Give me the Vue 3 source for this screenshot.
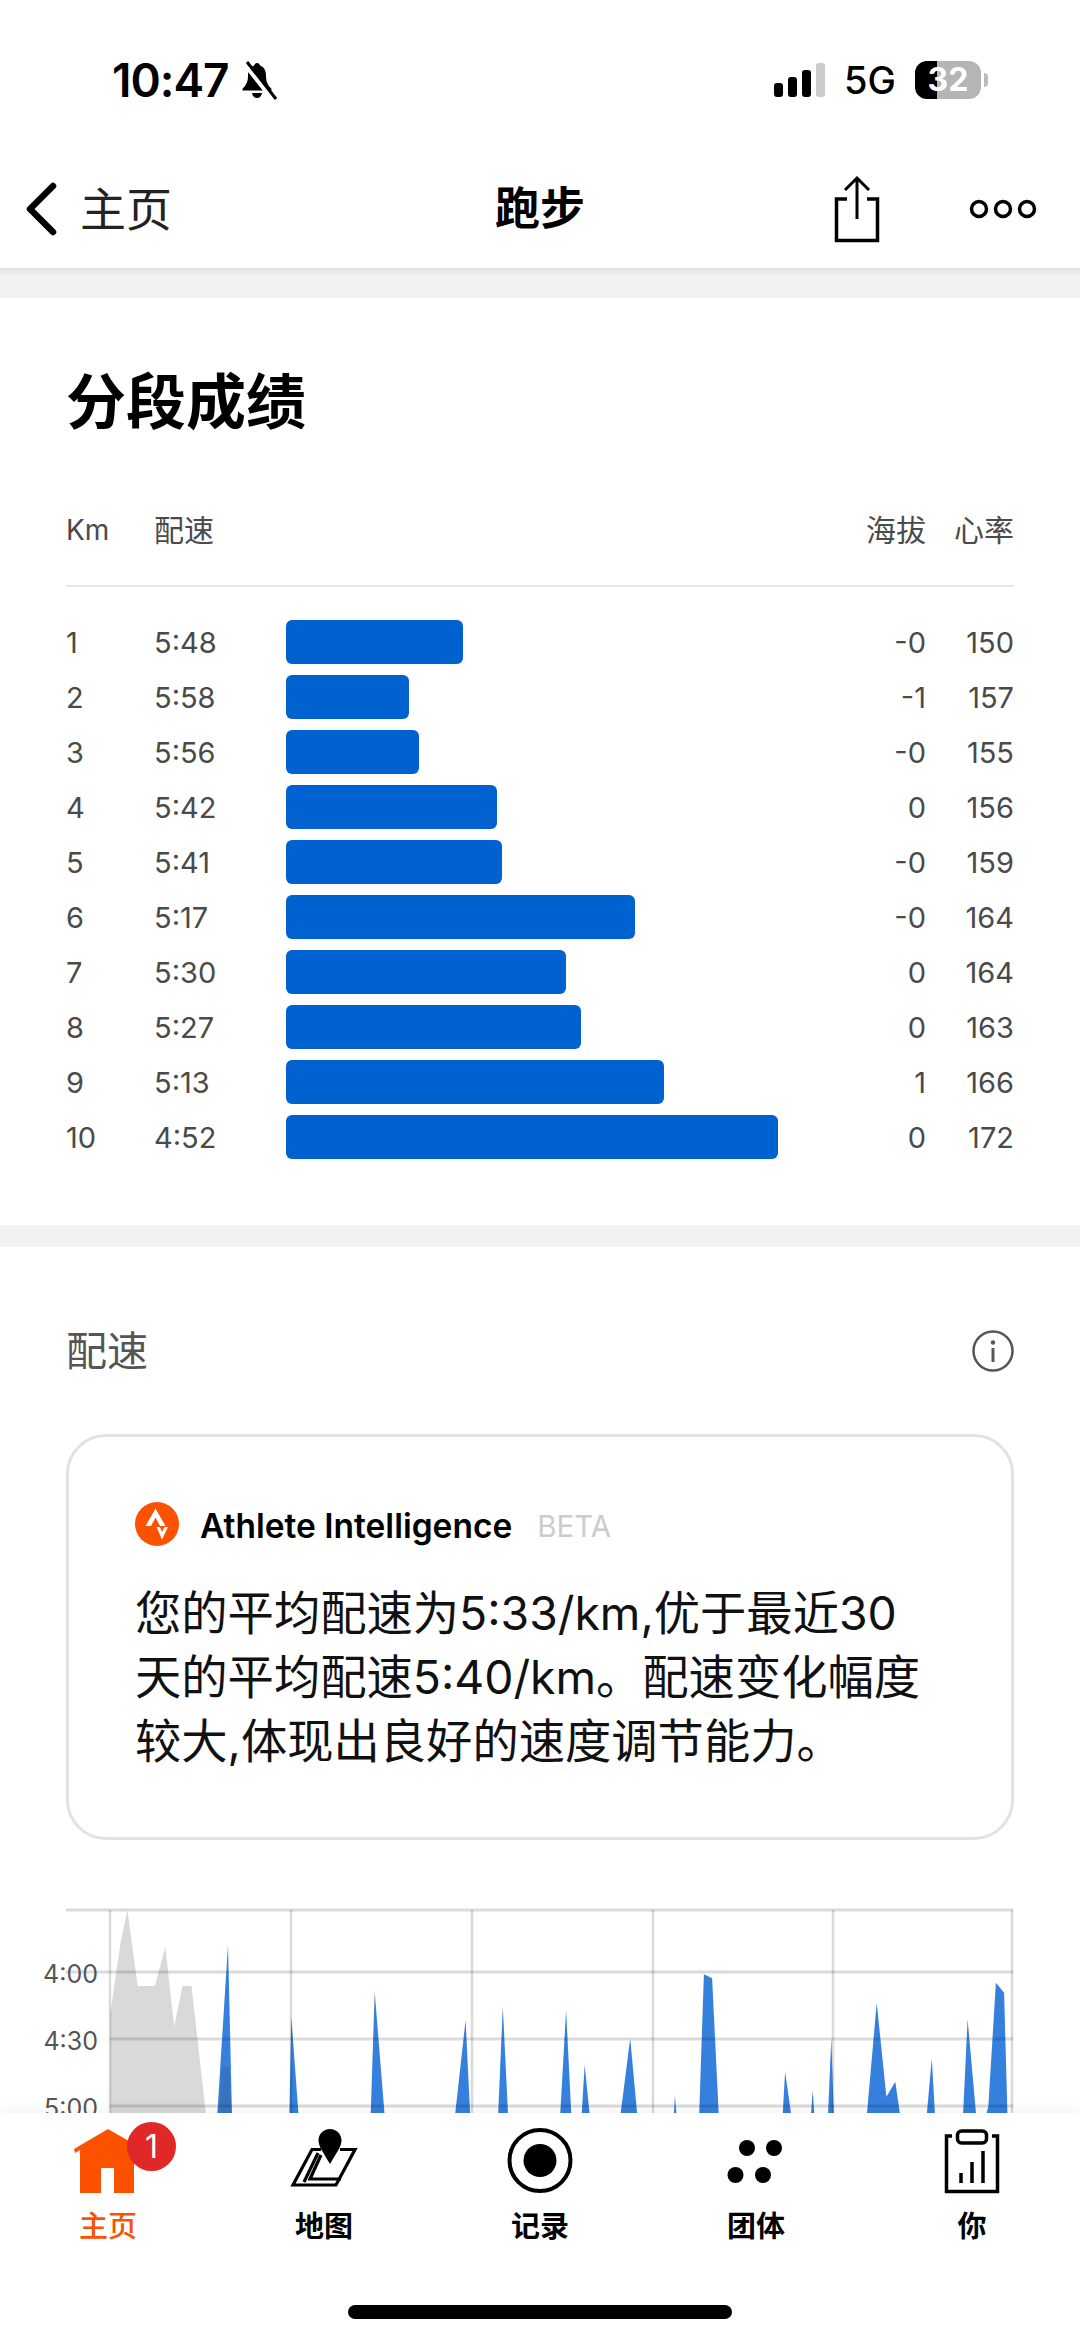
<template>
  <div class="phone">
    <header class="status">
      <div class="status-left">
        <span class="time">10:47</span>
        <svg class="bell" width="36" height="40" viewBox="0 0 36 40">
          <path d="M16 2c-1.500 0-2.500 1-2.800 2.500C8.500 6 7 10 7 15c0 6-2 9-5.500 13v1.500h29V28C27 24 25 21 25 15c0-5-1.500-9-6-10.500C18.700 3 17.500 2 16 2z" fill="#000" />
          <path d="M11 32h10c-.4 3-2.500 5-5 5s-4.600-2-5-5z" fill="#000" />
          <path d="M3 1l30 38" stroke="#fff" stroke-width="6" />
          <path d="M6 1l29 37" stroke="#000" stroke-width="3" />
        </svg>
      </div>
      <div class="status-right">
        <div class="signal">
          <i class="s1"></i><i class="s2"></i><i class="s3"></i><i class="s4"></i>
        </div>
        <span class="net">5G</span>
        <div class="battery"><span>32</span></div>
        <div class="nub"></div>
      </div>
    </header>

    <nav class="navbar">
      <div class="nav-side">
        <svg class="chevron" width="34" height="54" viewBox="0 0 34 54">
          <path d="M29 4L6 27l23 23" fill="none" stroke="#000" stroke-width="6.500" stroke-linecap="round" stroke-linejoin="round" />
        </svg>
        <span class="back">主页</span>
      </div>
      <div class="nav-title">跑步</div>
      <div class="nav-side nav-right">
        <svg class="share" width="48" height="68" viewBox="0 0 48 68">
          <path d="M14 24H3.500v41.500h41V24H34" fill="none" stroke="#000" stroke-width="3.500" />
          <path d="M24 44V3M12 15L24 3l12 12" fill="none" stroke="#000" stroke-width="3" />
        </svg>
        <svg class="more" width="68" height="22" viewBox="0 0 68 22">
          <circle cx="10" cy="11" r="7.500" fill="none" stroke="#000" stroke-width="3.500" />
          <circle cx="34" cy="11" r="7.500" fill="none" stroke="#000" stroke-width="3.500" />
          <circle cx="58" cy="11" r="7.500" fill="none" stroke="#000" stroke-width="3.500" />
        </svg>
      </div>
    </nav>

    <main class="content">
      <section class="splits">
        <h1>分段成绩</h1>
        <div class="splits-head">
          <span class="km-head">Km</span>
          <span>配速</span>
          <span></span>
          <span class="num">海拔</span>
          <span class="num">心率</span>
        </div>
        <div class="splits-rows">
          <div v-for="row in splits" :key="row.km" class="split-row">
            <span>{{ row.km }}</span>
            <span>{{ row.pace }}</span>
            <div class="bar" :style="{ width: row.bar + 'px' }"></div>
            <span class="num">{{ row.elev }}</span>
            <span class="num">{{ row.hr }}</span>
          </div>
        </div>
      </section>

      <section class="pace">
        <div class="pace-head">
          <span class="pace-title">配速</span>
          <svg width="42" height="42" viewBox="0 0 42 42">
            <circle cx="21" cy="21" r="19.500" fill="none" stroke="#555" stroke-width="2.500" />
            <circle cx="21" cy="12.500" r="2.200" fill="#555" />
            <path d="M21 18v14" stroke="#555" stroke-width="3" />
          </svg>
        </div>
        <div class="ai-card">
          <div class="ai-head">
            <svg width="44" height="44" viewBox="0 0 44 44">
              <circle cx="22" cy="22" r="22" fill="#fc5200" />
              <path d="M10.500 24L20.500 6.500 30.500 24h-5.500l-4.500-8.500L16 24z" fill="#fff" />
              <path d="M21.500 25L27 37.500 33 25h-3.500L27 30l-2.200-5z" fill="#fff" />
            </svg>
            <span class="ai-name">Athlete Intelligence</span>
            <span class="ai-beta">BETA</span>
          </div>
          <p>您的平均配速为5:33/km,优于最近30<br />天的平均配速5:40/km。配速变化幅度<br />较大,体现出良好的速度调节能力。</p>
        </div>

        <svg class="chart" width="1080" height="220" viewBox="0 1900 1080 220">
          <polygon :points="grayArea" fill="#d9d9d9" />
          <polygon v-for="(s, i) in spikes" :key="i" :points="s" fill="#3580dc" />
          <polygon :points="grayLow" fill="rgba(70,70,70,0.2)" />
          <g stroke="rgba(0,0,0,0.14)" stroke-width="3">
            <line x1="66" x2="1013" y1="1910" y2="1910" />
            <line x1="66" x2="1013" y1="1972" y2="1972" />
            <line x1="110" x2="1013" y1="2039" y2="2039" />
            <line x1="110" x2="1013" y1="2106" y2="2106" />
          </g>
          <g stroke="rgba(0,0,0,0.15)" stroke-width="2.500">
            <line v-for="x in gridX" :key="x" :x1="x" :x2="x" y1="1910" y2="2120" />
          </g>
          <g class="chart-label">
            <text x="98" y="1983">4:00</text>
            <text x="98" y="2050">4:30</text>
            <text x="98" y="2117">5:00</text>
          </g>
        </svg>
      </section>
    </main>

    <footer class="tabbar">
      <div class="tab active">
        <div class="tab-icon">
          <svg width="80" height="70" viewBox="0 0 80 70">
            <path d="M6 24L40 4l26 15v49H46V43H33v25H12V25l-5 3z" fill="#fc5200" />
          </svg>
          <span class="badge">1</span>
        </div>
        <span class="tab-label">主页</span>
      </div>
      <div class="tab">
        <div class="tab-icon">
          <svg width="80" height="70" viewBox="0 0 80 70">
            <path d="M37 24.500H28L9 60H52L71 24.500H56" fill="none" stroke="#000" stroke-width="3.200" />
            <path d="M34 28L20 57" fill="none" stroke="#000" stroke-width="3.200" />
            <path d="M37 30L26 54H57" fill="none" stroke="#000" stroke-width="3.200" />
            <path d="M46 4c6.500 0 11.500 5 11.500 11.500C57.500 22 51 30 46 39c-5-9-11.500-17-11.500-23.500C34.500 9 39.500 4 46 4z" fill="#000" />
          </svg>
        </div>
        <span class="tab-label">地图</span>
      </div>
      <div class="tab">
        <div class="tab-icon">
          <svg width="80" height="70" viewBox="0 0 80 70">
            <circle cx="40" cy="35.500" r="30.500" fill="none" stroke="#000" stroke-width="4" />
            <circle cx="40" cy="35.500" r="16.500" fill="#000" />
          </svg>
        </div>
        <span class="tab-label">记录</span>
      </div>
      <div class="tab">
        <div class="tab-icon">
          <svg width="80" height="70" viewBox="0 0 80 70">
            <circle cx="31" cy="23" r="8" fill="#000" />
            <circle cx="58" cy="23" r="8" fill="#000" />
            <circle cx="19.500" cy="50" r="8" fill="#000" />
            <circle cx="47" cy="50" r="8" fill="#000" />
          </svg>
        </div>
        <span class="tab-label">团体</span>
      </div>
      <div class="tab">
        <div class="tab-icon">
          <svg width="80" height="70" viewBox="0 0 80 70">
            <path d="M20 11H14.500v55.500h51V11H60" fill="none" stroke="#000" stroke-width="3.500" />
            <rect x="25.500" y="6" width="29" height="12" rx="4" fill="#fff" stroke="#000" stroke-width="3.500" />
            <path d="M29 48v10M40 37v21M51 26v32" fill="none" stroke="#000" stroke-width="3.500" />
          </svg>
        </div>
        <span class="tab-label">你</span>
      </div>
      <div class="home-bar"></div>
    </footer>
  </div>
</template>

<script setup>
const splits = [
  { km: 1, pace: '5:48', bar: 177, elev: '-0', hr: 150 },
  { km: 2, pace: '5:58', bar: 123, elev: '-1', hr: 157 },
  { km: 3, pace: '5:56', bar: 133, elev: '-0', hr: 155 },
  { km: 4, pace: '5:42', bar: 211, elev: '0', hr: 156 },
  { km: 5, pace: '5:41', bar: 216, elev: '-0', hr: 159 },
  { km: 6, pace: '5:17', bar: 349, elev: '-0', hr: 164 },
  { km: 7, pace: '5:30', bar: 280, elev: '0', hr: 164 },
  { km: 8, pace: '5:27', bar: 295, elev: '0', hr: 163 },
  { km: 9, pace: '5:13', bar: 378, elev: '1', hr: 166 },
  { km: 10, pace: '4:52', bar: 492, elev: '0', hr: 172 },
]

const gridX = [110, 291, 472, 653, 833, 1012]

// traced from a crop stretched 1.452x / 3x, offset 1880
const toPoints = (pts) =>
  pts.map(([x, y]) => `${(x / 1.452).toFixed(1)},${(y / 3 + 1880).toFixed(1)}`).join(' ')

const grayArea = toPoints([
  [160, 720], [160, 400], [175, 190], [185, 90], [200, 318], [225, 318], [240, 200],
  [253, 440], [265, 318], [278, 318], [300, 720],
])

const grayLow = toPoints([[318, 720], [322, 560], [333, 560], [337, 720]])

const spikes = [
  [[315, 720], [331, 195], [337, 720]],
  [[420, 720], [423, 410], [434, 720]],
  [[538, 720], [544, 335], [559, 720]],
  [[660, 720], [676, 420], [683, 720]],
  [[723, 720], [730, 380], [738, 720]],
  [[813, 720], [822, 390], [830, 720]],
  [[844, 720], [849, 555], [857, 720]],
  [[900, 720], [915, 475], [926, 720]],
  [[978, 720], [980, 645], [983, 720]],
  [[1015, 720], [1022, 283], [1034, 295], [1044, 720]],
  [[1136, 720], [1140, 575], [1150, 720]],
  [[1177, 720], [1180, 630], [1183, 720]],
  [[1202, 720], [1207, 475], [1211, 720]],
  [[1258, 720], [1273, 368], [1287, 650], [1300, 605], [1308, 720]],
  [[1345, 720], [1353, 535], [1358, 720]],
  [[1398, 720], [1405, 418], [1418, 720]],
  [[1430, 720], [1435, 680], [1446, 308], [1458, 338], [1463, 720]],
].map(toPoints)
</script>

<style scoped>
.phone {
  width: 1080px;
  height: 2341px;
  display: flex;
  flex-direction: column;
  overflow: hidden;
  background: #fff;
  color: #000;
  font-family: Inter, "Noto Sans CJK SC", sans-serif;
}

.status {
  height: 150px;
  flex: none;
  display: flex;
  justify-content: space-between;
  padding: 58px 92px 0 112px;
  box-sizing: border-box;
}

.status-left,
.status-right {
  display: flex;
  align-items: flex-start;
}

.time {
  font-size: 46px;
  font-weight: 600;
  line-height: 44px;
  letter-spacing: -1px;
}

.bell {
  margin: 3px 0 0 12px;
}

.signal {
  display: flex;
  align-items: flex-end;
  gap: 5px;
  height: 34px;
  margin-top: 5px;
}

.signal i {
  width: 9px;
  border-radius: 3px;
  background: #000;
}

.s1 { height: 14px; }
.s2 { height: 20px; }
.s3 { height: 27px; }
.s4 { height: 34px; background: #ccc !important; }

.net {
  margin-left: 19px;
  font-size: 38px;
  font-weight: 500;
  line-height: 44px;
}

.battery {
  width: 66px;
  height: 38px;
  margin: 3px 0 0 19px;
  border-radius: 12px;
  background: linear-gradient(90deg, #000 22px, #b5b5b5 22px);
  color: #fff;
  font-size: 32px;
  font-weight: 700;
  line-height: 38px;
  text-align: center;
}

.nub {
  width: 4px;
  height: 14px;
  margin: 15px 0 0 3px;
  border-radius: 0 4px 4px 0;
  background: #bbb;
}

.navbar {
  height: 118px;
  flex: none;
  display: flex;
  align-items: center;
  padding: 0 24px;
  box-sizing: border-box;
}

.nav-side {
  flex: 1;
  display: flex;
  align-items: center;
}

.nav-right {
  justify-content: flex-end;
  gap: 88px;
}

.back {
  margin-left: 22px;
  font-size: 46px;
  line-height: 54px;
  color: #222;
}

.nav-title {
  font-size: 45px;
  font-weight: 700;
  line-height: 54px;
}

.more {
  margin-right: 19px;
}

.content {
  flex: 1;
  min-height: 0;
  overflow: hidden;
  padding-top: 30px;
  background: linear-gradient(#e2e2e2, #f2f2f0 8px);
}

.splits {
  padding: 74px 66px 66px;
  background: #fff;
}

.splits h1 {
  margin: 0 0 78px;
  font-size: 60px;
  font-weight: 700;
  line-height: 60px;
}

.splits-head,
.split-row {
  display: grid;
  grid-template-columns: 88px 132px 1fr 70px 88px;
  align-items: center;
  font-size: 29px;
  color: #4a4a4a;
}

.splits-head {
  padding-bottom: 35px;
  border-bottom: 2px solid #e8e8e8;
  font-size: 30px;
  line-height: 40px;
}

.km-head {
  font-size: 28px;
}

.splits-rows {
  display: flex;
  flex-direction: column;
  gap: 11px;
  margin-top: 33px;
}

.split-row {
  height: 44px;
}

.num {
  text-align: right;
}

.bar {
  height: 44px;
  border-radius: 6px;
  background: #0061d1;
}

.pace {
  margin-top: 22px;
  padding: 79px 0 0;
  background: #fff;
}

.pace-head {
  display: flex;
  justify-content: space-between;
  align-items: center;
  height: 50px;
  padding: 0 66px;
  font-size: 41px;
  color: #555;
}

.pace-title {
  margin-bottom: 6px;
}

.ai-card {
  margin: 58px 66px 0;
  padding: 65px 66px 64px;
  border: 3px solid #e2e2e2;
  border-radius: 40px;
}

.ai-head {
  display: flex;
  align-items: center;
  height: 44px;
}

.ai-name {
  margin: 3px 0 0 21px;
  font-size: 33.500px;
  font-weight: 600;
}

.ai-beta {
  margin: 3px 0 0 25px;
  font-size: 29.500px;
  color: #ccc;
}

.ai-card p {
  margin: 35px 0 0;
  font-size: 46.300px;
  line-height: 64px;
  color: #111;
  white-space: nowrap;
}

.chart {
  display: block;
  margin-top: 60px;
}

.chart-label text {
  font-size: 25px;
  fill: #555;
  text-anchor: end;
}

.tabbar {
  position: relative;
  height: 228px;
  flex: none;
  display: grid;
  grid-template-columns: repeat(5, 216px);
  background: #fff;
  box-shadow: 0 -6px 10px rgba(0, 0, 0, 0.035);
}

.tab {
  display: flex;
  flex-direction: column;
  align-items: center;
  padding-top: 12px;
}

.tab-icon {
  position: relative;
  height: 70px;
}

.tab-icon svg {
  display: block;
}

.tab-label {
  margin-top: 14px;
  font-size: 29px;
  font-weight: 700;
  line-height: 36px;
}

.active .tab-label {
  color: #fc5200;
  font-weight: 500;
}

.badge {
  position: absolute;
  left: 59px;
  top: -3px;
  width: 49px;
  height: 49px;
  border-radius: 50%;
  background: #e02828;
  color: #fff;
  font-size: 32px;
  line-height: 49px;
  text-align: center;
}

.home-bar {
  position: absolute;
  left: 348px;
  top: 192px;
  width: 384px;
  height: 14px;
  border-radius: 7px;
  background: #000;
}
</style>
